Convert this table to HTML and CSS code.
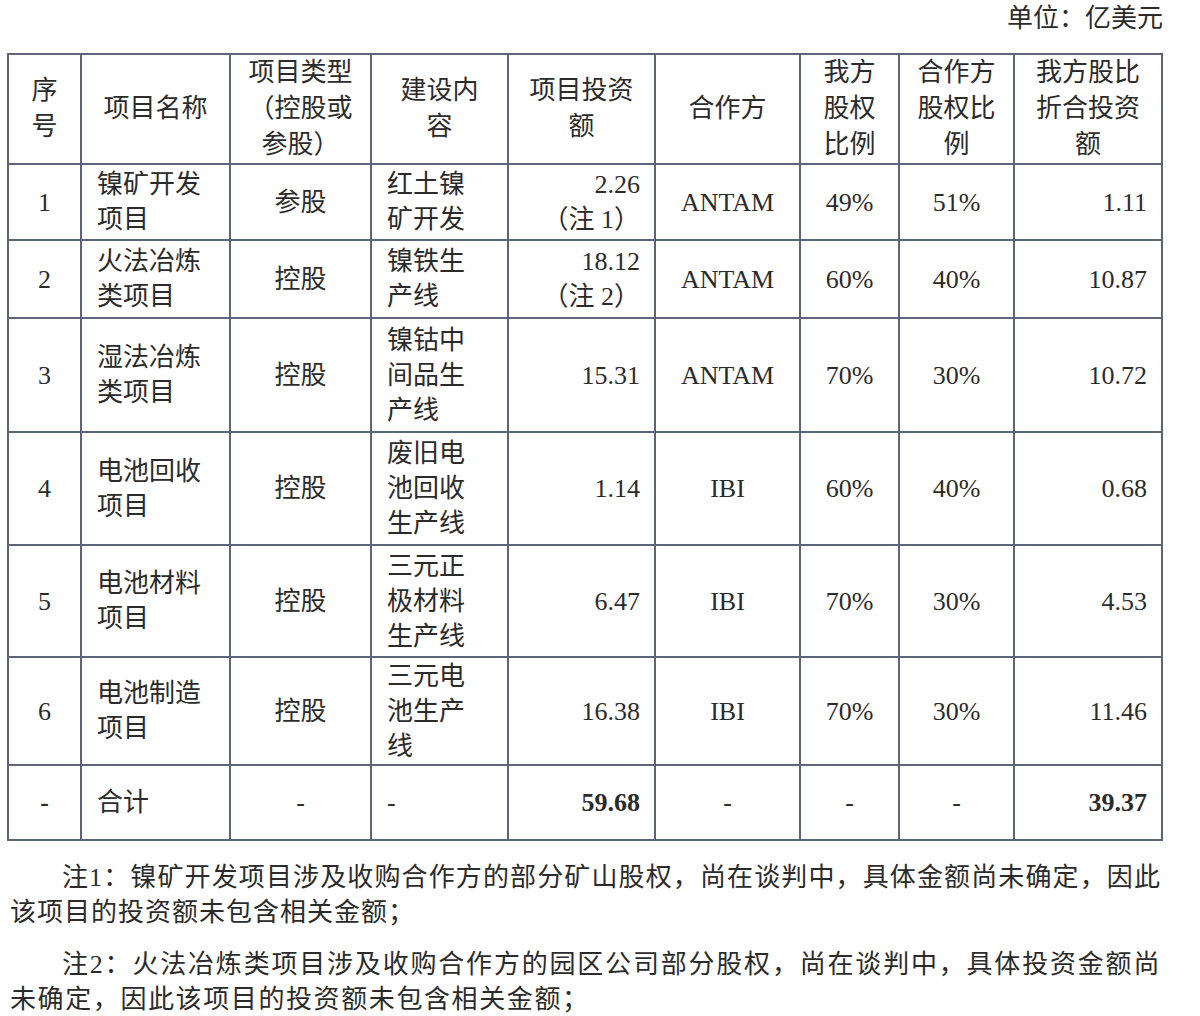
FILE: index.html
```html
<!DOCTYPE html>
<html lang="zh-CN">
<head>
<meta charset="utf-8">
<title>项目投资</title>
<link rel="stylesheet" href="styles.css">
</head>
<body>
<div class="page">
  <div class="unit">单位：亿美元</div>
  <table class="grid">
    <colgroup>
      <col class="c1"><col class="c2"><col class="c3"><col class="c4"><col class="c5">
      <col class="c6"><col class="c7"><col class="c8"><col class="c9">
    </colgroup>
    <thead>
      <tr class="rh">
        <th>序<br>号</th>
        <th>项目名称</th>
        <th>项目类型<br>（控股或<br>参股）</th>
        <th>建设内<br>容</th>
        <th>项目投资<br>额</th>
        <th>合作方</th>
        <th>我方<br>股权<br>比例</th>
        <th>合作方<br>股权比<br>例</th>
        <th>我方股比<br>折合投资<br>额</th>
      </tr>
    </thead>
    <tbody>
      <tr class="r1">
        <td class="ctr">1</td><td class="lft">镍矿开发<br>项目</td><td class="ctr">参股</td><td class="lft">红土镍<br>矿开发</td>
        <td class="rgt">2.26<br>（注 1）</td><td class="ctr">ANTAM</td><td class="ctr">49%</td><td class="ctr">51%</td><td class="rgt">1.11</td>
      </tr>
      <tr class="r2">
        <td class="ctr">2</td><td class="lft">火法冶炼<br>类项目</td><td class="ctr">控股</td><td class="lft">镍铁生<br>产线</td>
        <td class="rgt">18.12<br>（注 2）</td><td class="ctr">ANTAM</td><td class="ctr">60%</td><td class="ctr">40%</td><td class="rgt">10.87</td>
      </tr>
      <tr class="r3">
        <td class="ctr">3</td><td class="lft">湿法冶炼<br>类项目</td><td class="ctr">控股</td><td class="lft">镍钴中<br>间品生<br>产线</td>
        <td class="rgt">15.31</td><td class="ctr">ANTAM</td><td class="ctr">70%</td><td class="ctr">30%</td><td class="rgt">10.72</td>
      </tr>
      <tr class="r4">
        <td class="ctr">4</td><td class="lft">电池回收<br>项目</td><td class="ctr">控股</td><td class="lft">废旧电<br>池回收<br>生产线</td>
        <td class="rgt">1.14</td><td class="ctr">IBI</td><td class="ctr">60%</td><td class="ctr">40%</td><td class="rgt">0.68</td>
      </tr>
      <tr class="r5">
        <td class="ctr">5</td><td class="lft">电池材料<br>项目</td><td class="ctr">控股</td><td class="lft">三元正<br>极材料<br>生产线</td>
        <td class="rgt">6.47</td><td class="ctr">IBI</td><td class="ctr">70%</td><td class="ctr">30%</td><td class="rgt">4.53</td>
      </tr>
      <tr class="r6">
        <td class="ctr">6</td><td class="lft">电池制造<br>项目</td><td class="ctr">控股</td><td class="lft">三元电<br>池生产<br>线</td>
        <td class="rgt">16.38</td><td class="ctr">IBI</td><td class="ctr">70%</td><td class="ctr">30%</td><td class="rgt">11.46</td>
      </tr>
      <tr class="rt">
        <td class="ctr b">-</td><td class="lft">合计</td><td class="ctr">-</td><td class="lft">-</td>
        <td class="rgt b">59.68</td><td class="ctr">-</td><td class="ctr">-</td><td class="ctr">-</td><td class="rgt b">39.37</td>
      </tr>
    </tbody>
  </table>
  <p class="note">注1：镍矿开发项目涉及收购合作方的部分矿山股权，尚在谈判中，具体金额尚未确定，因此该项目的投资额未包含相关金额；</p>
  <p class="note note-wide">注2：火法冶炼类项目涉及收购合作方的园区公司部分股权，尚在谈判中，具体投资金额尚未确定，因此该项目的投资额未包含相关金额；</p>
</div>
</body>
</html>
```

FILE: styles.css
```css
html, body {
  margin: 0;
  padding: 0;
  background: #ffffff;
}

body {
  font-family: "Liberation Serif", "Noto Sans CJK SC", serif;
  color: #2b2b2b;
  font-size: 26px;
  line-height: 35px;
}

.page {
  width: 1154px;
  padding: 1px 0 0 7px;
}

.unit {
  text-align: right;
  margin-right: -2px;
  height: 35px;
  margin-bottom: 17px;
}

.grid {
  border-collapse: collapse;
  table-layout: fixed;
  width: 1154px;
}

.grid th,
.grid td {
  border: 2px solid #5d6679;
  padding: 0;
  vertical-align: middle;
  font-weight: 400;
}

.grid th {
  text-align: center;
  line-height: 36px;
}

.c1 { width: 73px; }
.c2 { width: 149px; }
.c3 { width: 141px; }
.c4 { width: 137px; }
.c5 { width: 147px; }
.c6 { width: 145px; }
.c7 { width: 99px; }
.c8 { width: 115px; }
.c9 { width: 148px; }

.ctr { text-align: center; }
.lft { text-align: left; padding-left: 15px !important; }
.rgt { text-align: right; padding-right: 14px !important; }
.b { font-weight: 700 !important; }

.rh { height: 109px; }
.r1 { height: 76px; }
.r2 { height: 78px; }
.r3 { height: 114px; }
.r4 { height: 113px; }
.r5 { height: 112px; }
.r6 { height: 108px; }
.rt { height: 75px; }

.note {
  margin: 19px 0 0 0;
  padding-left: 3px;
  text-indent: 52px;
  text-align: justify;
  letter-spacing: 1px;
  line-height: 35px;
}

.note + .note {
  margin-top: 17px;
}

.note-wide {
  letter-spacing: 1.6px;
}
```
